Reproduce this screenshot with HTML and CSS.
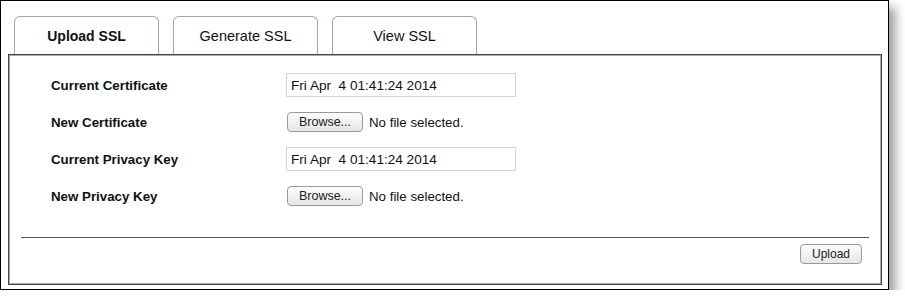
FILE: index.html
```html
<!DOCTYPE html>
<html lang="en">

<head>
	<meta charset="utf-8">
	<title>SSL</title>
	<link rel="stylesheet" href="styles.css">
</head>

<body>

	<div class="frame">

		<div class="tabs">
			<div class="tab active">Upload SSL</div>
			<div class="tab">Generate SSL</div>
			<div class="tab">View SSL</div>
		</div>

		<div class="panel">
			<div class="rows">
				<div class="row">
					<span class="label">Current Certificate</span>
					<span class="field">Fri Apr&nbsp; 4 01:41:24 2014</span>
				</div>
				<div class="row">
					<span class="label">New Certificate</span>
					<span class="btn">Browse...</span>
					<span class="nofile">No file selected.</span>
				</div>
				<div class="row">
					<span class="label">Current Privacy Key</span>
					<span class="field">Fri Apr&nbsp; 4 01:41:24 2014</span>
				</div>
				<div class="row">
					<span class="label">New Privacy Key</span>
					<span class="btn">Browse...</span>
					<span class="nofile">No file selected.</span>
				</div>
			</div>

			<div class="footer">
				<span class="btn upload">Upload</span>
			</div>
		</div>

	</div>

</body>

</html>
```

FILE: styles.css
```css
body {
	margin: 0;
	padding: 0;
	background-color: #fff;
	font-family: "Liberation Sans", Arial, sans-serif;
	color: #000;
}

.frame {
	width: 889px;
	height: 290px;
	box-sizing: border-box;
	border: 1px solid #000;
	background-color: #fff;
	box-shadow: 6px 7px 10px rgba(0, 0, 0, 0.4);
	padding-top: 15px;
}

.tabs {
	display: flex;
	gap: 14px;
	margin-left: 13px;
}

.tab {
	width: 143px;
	height: 37px;
	border: 1px solid #9ea6bd;
	border-bottom: none;
	border-radius: 6px 6px 0 0;
	display: flex;
	align-items: center;
	justify-content: center;
	font-size: 14.5px;
	color: #111;
}

.tab.active {
	font-weight: bold;
	font-size: 14px;
}

.panel {
	margin-left: 7px;
	width: 874px;
	height: 231px;
	box-sizing: border-box;
	border: 1px solid #444;
	box-shadow: inset 0 0 0 1px #a8a8a8;
	padding: 18px 12px 0 12px;
	display: flex;
	flex-direction: column;
}

.rows {
	display: flex;
	flex-direction: column;
	gap: 13px;
	padding-left: 30px;
}

.row {
	display: flex;
	align-items: center;
	height: 24px;
}

.label {
	width: 235px;
	font-size: 13.3px;
	font-weight: bold;
	color: #111;
}

.field {
	width: 230px;
	height: 24px;
	box-sizing: border-box;
	border: 1px solid #d4d4d4;
	padding-left: 4px;
	display: flex;
	align-items: center;
	font-size: 13.6px;
	color: #111;
}

.btn {
	height: 20px;
	box-sizing: border-box;
	border: 1px solid #9a9a9a;
	border-radius: 4px;
	background: linear-gradient(#fcfcfc, #e6e6e6);
	display: inline-flex;
	align-items: center;
	justify-content: center;
	font-size: 12.5px;
	color: #222;
	width: 76px;
	margin-left: 1px;
}

.nofile {
	margin-left: 6px;
	font-size: 13.3px;
	color: #111;
}

.footer {
	margin-top: 29px;
	border-top: 1px solid #555;
	display: flex;
	justify-content: flex-end;
	padding-top: 6px;
	padding-right: 7px;
}

.upload {
	width: 62px;
	font-size: 12px;
}
```
